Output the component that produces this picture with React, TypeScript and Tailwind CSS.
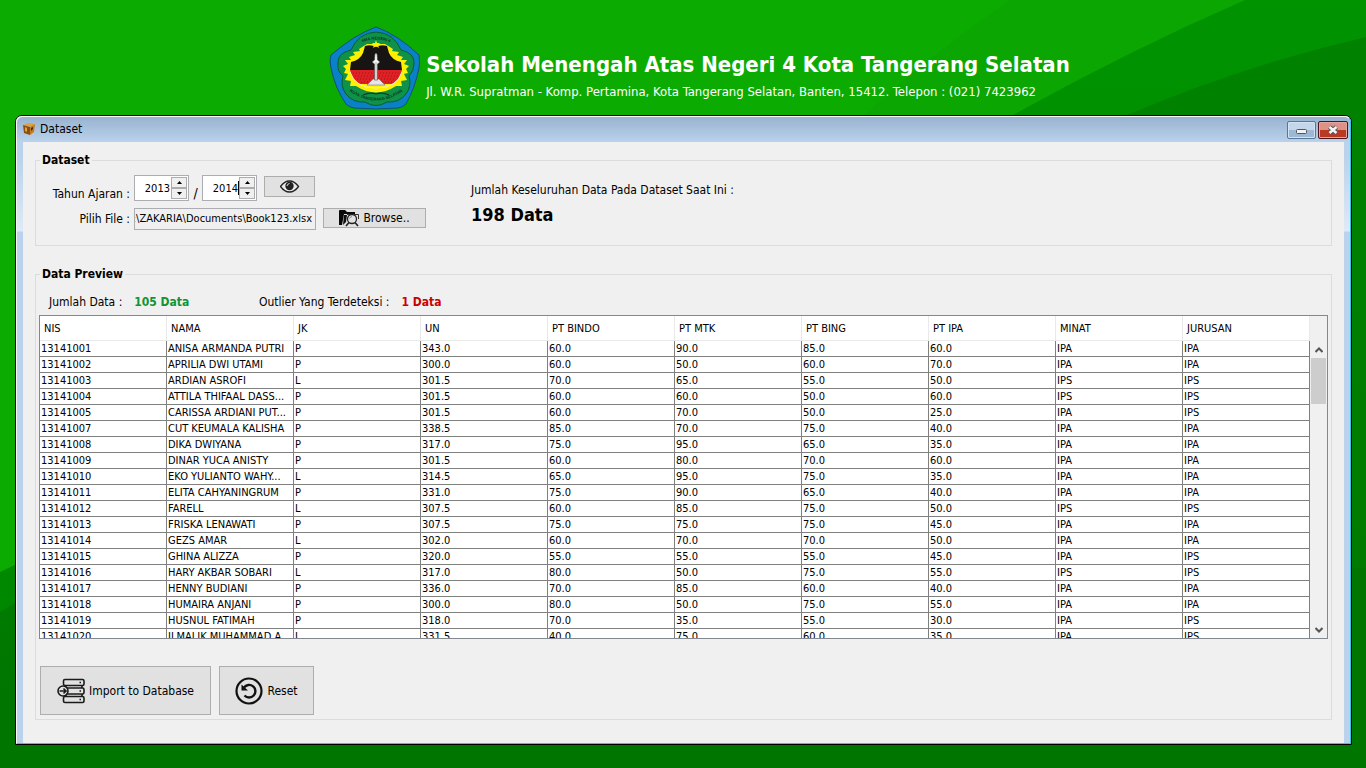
import React from "react";

const columns = ["NIS", "NAMA", "JK", "UN", "PT BINDO", "PT MTK", "PT BING", "PT IPA", "MINAT", "JURUSAN"];

const students: string[][] = [
  ["13141001", "ANISA ARMANDA PUTRI", "P", "343.0", "60.0", "90.0", "85.0", "60.0", "IPA", "IPA"],
  ["13141002", "APRILIA DWI UTAMI", "P", "300.0", "60.0", "50.0", "60.0", "70.0", "IPA", "IPA"],
  ["13141003", "ARDIAN ASROFI", "L", "301.5", "70.0", "65.0", "55.0", "50.0", "IPS", "IPS"],
  ["13141004", "ATTILA THIFAAL DASS...", "P", "301.5", "60.0", "60.0", "50.0", "60.0", "IPS", "IPS"],
  ["13141005", "CARISSA ARDIANI PUT...", "P", "301.5", "60.0", "70.0", "50.0", "25.0", "IPA", "IPS"],
  ["13141007", "CUT KEUMALA KALISHA", "P", "338.5", "85.0", "70.0", "75.0", "40.0", "IPA", "IPA"],
  ["13141008", "DIKA DWIYANA", "P", "317.0", "75.0", "95.0", "65.0", "35.0", "IPA", "IPA"],
  ["13141009", "DINAR YUCA ANISTY", "P", "301.5", "60.0", "80.0", "70.0", "60.0", "IPA", "IPA"],
  ["13141010", "EKO YULIANTO WAHY...", "L", "314.5", "65.0", "95.0", "75.0", "35.0", "IPA", "IPA"],
  ["13141011", "ELITA CAHYANINGRUM", "P", "331.0", "75.0", "90.0", "65.0", "40.0", "IPA", "IPA"],
  ["13141012", "FARELL", "L", "307.5", "60.0", "85.0", "75.0", "50.0", "IPS", "IPS"],
  ["13141013", "FRISKA LENAWATI", "P", "307.5", "75.0", "75.0", "75.0", "45.0", "IPA", "IPA"],
  ["13141014", "GEZS AMAR", "L", "302.0", "60.0", "70.0", "70.0", "50.0", "IPA", "IPA"],
  ["13141015", "GHINA ALIZZA", "P", "320.0", "55.0", "55.0", "55.0", "45.0", "IPA", "IPS"],
  ["13141016", "HARY AKBAR SOBARI", "L", "317.0", "80.0", "50.0", "75.0", "55.0", "IPS", "IPS"],
  ["13141017", "HENNY BUDIANI", "P", "336.0", "70.0", "85.0", "60.0", "40.0", "IPA", "IPA"],
  ["13141018", "HUMAIRA ANJANI", "P", "300.0", "80.0", "50.0", "75.0", "55.0", "IPA", "IPA"],
  ["13141019", "HUSNUL FATIMAH", "P", "318.0", "70.0", "35.0", "55.0", "30.0", "IPA", "IPS"],
  ["13141020", "ILMALIK MUHAMMAD A...", "L", "331.5", "40.0", "75.0", "60.0", "35.0", "IPA", "IPS"],
];

function Backdrop() {
  return (
    <svg className="absolute inset-0 h-full w-full" viewBox="0 0 1366 768" preserveAspectRatio="none" aria-hidden="true">
      <defs>
        <linearGradient id="mid" x1="0" y1="0" x2="0" y2="1">
          <stop offset="0" stopColor="#009300" />
          <stop offset="1" stopColor="#008400" />
        </linearGradient>
        <linearGradient id="deep" x1="0" y1="0" x2="0" y2="1">
          <stop offset="0" stopColor="#008200" />
          <stop offset="0.8" stopColor="#007a00" />
          <stop offset="1" stopColor="#007200" />
        </linearGradient>
      </defs>
      <rect width="1366" height="768" fill="#0cab02" />
      <path d="M1010 0H1366V300H700Q820 130 1010 0Z" fill="#0ca602" />
      <path d="M1245 0Q1130 50 1013 115Q700 300 400 420Q150 500 0 572V768H1366V0Z" fill="url(#mid)" />
      <path d="M1366 37Q1245 65 1127 115Q850 240 500 420Q150 520 0 612V768H1366Z" fill="url(#deep)" />
      <path d="M0 700Q500 560 1366 568V768H0Z" fill="#007600" />
    </svg>
  );
}

function Emblem() {
  return (
    <svg className="h-[92px] w-24 shrink-0" viewBox="0 0 96 92" role="img" aria-label="Lambang SMA Negeri 4">
      <defs>
        <path id="arcTop" d="M26 25Q48 10 70 25" />
        <path id="arcBottom" d="M17 66Q48 91 79 66" />
      </defs>
      <path d="M48 5Q70 13 91 33Q92 40 91 46Q87 66 78 82Q75 85 70 86Q48 88 26 86Q21 85 18 82Q7 66 3 46Q1 38 3 33Q26 13 48 5Z" fill="#0a80c8" stroke="#12507a" strokeWidth="1" />
      <path d="M48 10Q66 11 73 28Q87 31 86 42Q86 49 81 54Q84 64 78 72Q71 81 59 80Q48 87 37 80Q25 81 18 72Q12 64 15 54Q9 49 10 42Q9 31 23 28Q30 11 48 10Z" fill="#0f9147" stroke="#075f2d" strokeWidth="1" />
      <path d="M39 22L31 27L32 29L25 30L27 33L21 35L23 38L17 38L20 42L15 44L18 47L16 51L20 52L17 58L23 59L22 64L28 64Q48 77 68 64L74 64L73 59L79 58L76 52L80 51L78 47L81 44L76 42L79 38L73 38L75 35L69 33L71 30L64 29L65 27L57 22Z" fill="#fff000" />
      <path d="M37 24Q43 22 48 25Q53 22 59 24L61 31Q64 38 73 40L74 48H22L23 40Q32 38 35 31Z" fill="#191414" />
      <path d="M22 48H74Q72 58 64 62H32Q24 58 22 48Z" fill="#df2025" />
      <path d="M25 51H72M27 54H70M29 57H68M33 60H64" stroke="#9d1518" strokeWidth="1" strokeDasharray="1 2" />
      <path d="M22 50Q27 66 48 66Q69 66 74 50" fill="none" stroke="#f5efce" strokeWidth="1" />
      <path d="M39 63L45 57H51L57 63Z" fill="#e6e6e6" stroke="#665555" strokeWidth="0.5" />
      <path d="M46.500 58V42L44 40L46.500 38L46.800 33Q48 29 49.200 33L49.500 38L52 40L49.500 42V58Z" fill="#f5f5f5" stroke="#444" strokeWidth="0.600" />
      <path d="M48 40V58" stroke="#999" strokeWidth="0.800" />
      <path d="M48 18L49 21L52 21L50 23L51 26L48 24L45 26L46 23L44 21L47 21Z" fill="#fff000" />
      <path d="M35 73Q42 70 48 72Q54 70 61 73" fill="none" stroke="#123b22" strokeWidth="1.200" />
      <text fill="#07381c" fontFamily="Liberation Sans, sans-serif" fontWeight="700" fontSize="4">
        <textPath href="#arcTop" startOffset="50%" textAnchor="middle">SMA NEGERI 4</textPath>
      </text>
      <text fill="#07381c" fontFamily="Liberation Sans, sans-serif" fontWeight="700" fontSize="4">
        <textPath href="#arcBottom" startOffset="50%" textAnchor="middle">KOTA TANGERANG SELATAN</textPath>
      </text>
    </svg>
  );
}

function CubeIcon() {
  return (
    <svg className="h-[14px] w-[14px]" viewBox="0 0 14 14" aria-hidden="true">
      <path d="M1 3L6 1L13 2L8 5Z" fill="#d9a441" />
      <path d="M1 3L8 5V13L2 11Z" fill="#8a4f10" />
      <path d="M8 5L13 2L12 10L8 13Z" fill="#c57d1c" />
      <path d="M3 5L5 6V10L3 9Z" fill="#e2a23c" />
      <path d="M9 6L11 5V7L9 9Z" fill="#4a2806" />
    </svg>
  );
}

function EyeIcon() {
  return (
    <svg className="h-[14px] w-5" viewBox="0 0 20 14" aria-hidden="true">
      <path d="M0.500 6.500Q4.500 1 9.500 1T18.500 6.500Q14.500 12 9.500 12T0.500 6.500Z" fill="#ececec" stroke="#222" strokeWidth="1.300" />
      <circle cx="9.500" cy="6" r="4.200" fill="#222" />
      <path d="M9.500 3.500A3 3 0 0 0 7 6" fill="none" stroke="#ddd" strokeWidth="1" />
    </svg>
  );
}

function FolderSearchIcon() {
  return (
    <svg className="h-[18px] w-5 shrink-0" viewBox="0 0 20 18" aria-hidden="true">
      <path d="M0 16V2Q0 1 1 1H6L8 3H16V5H5L3 16Z" fill="#0a0a0a" />
      <path d="M5 6H8L7 13L4 16Z" fill="#111" />
      <path d="M8 5.500H19.500V10" fill="none" stroke="#333" strokeWidth="1" />
      <circle cx="13" cy="10" r="4.500" fill="#e1e1e1" stroke="#222" strokeWidth="1.300" />
      <path d="M10.500 9.500A3 3 0 0 1 13 7.500" fill="none" stroke="#888" />
      <path d="M10 13.500L7 17M16 13.500L19 17" stroke="#222" strokeWidth="1.600" />
    </svg>
  );
}

function DatabaseImportIcon() {
  return (
    <svg className="h-[26px] w-[28px] shrink-0" viewBox="0 0 28 26" fill="none" stroke="#1b1b1b" strokeWidth="1.600" aria-hidden="true">
      <rect x="6.500" y="1.500" width="20.500" height="6" rx="1.500" />
      <rect x="6.500" y="18.500" width="20.500" height="6" rx="1.500" />
      <path d="M10 10H25.500Q27 10 27 11.500V14.500Q27 16 25.500 16H10" />
      <path d="M9 7.500V10M25 7.500V10M9 16V18.500M25 16V18.500" />
      <circle cx="6" cy="13" r="5" fill="#e1e1e1" />
      <path d="M2.500 13H9M6.500 10.500L9 13L6.500 15.500" />
      <path d="M22.500 4.500H24M22.500 13H24M22.500 21.500H24" strokeWidth="1.500" />
    </svg>
  );
}

function ResetIcon() {
  return (
    <svg className="h-7 w-7 shrink-0" viewBox="0 0 28 28" fill="none" stroke="#111" aria-hidden="true">
      <circle cx="14" cy="14" r="12.500" strokeWidth="2.200" />
      <path d="M9 10.500A6.300 6.300 0 1 1 9.500 18.500" strokeWidth="2.400" />
      <path d="M6.500 7.500V13.500H13Z" fill="#111" stroke="none" />
    </svg>
  );
}

function YearSpinner({ id, label, value, active }: { id: string; label: string; value: string; active?: boolean }) {
  return (
    <div className="flex h-[26px] w-[55px] border border-[#abadb3] bg-white p-px">
      <input id={id} aria-label={label} defaultValue={value} className="min-w-0 flex-1 bg-white pt-[2px] text-right text-[11px] outline-none" />
      <span className={active ? "my-1 w-px bg-black" : "my-1 w-px"} />
      <div className="flex w-4 flex-col">
        <button type="button" aria-label={label + " naik"} className="flex flex-1 items-center justify-center border border-[#acacac] bg-[#f0f0f0]">
          <svg className="h-[3px] w-[5px]" viewBox="0 0 5 3" aria-hidden="true"><path d="M0 3L2.500 0L5 3Z" /></svg>
        </button>
        <button type="button" aria-label={label + " turun"} className="flex flex-1 items-center justify-center border border-[#acacac] bg-[#f0f0f0]">
          <svg className="h-[3px] w-[5px]" viewBox="0 0 5 3" aria-hidden="true"><path d="M0 0L2.500 3L5 0Z" /></svg>
        </button>
      </div>
    </div>
  );
}

function DatasetPanel() {
  return (
    <fieldset className="h-[93px] border border-[#dcdcdc]">
      <legend className="ml-1 px-[2px] text-[12px] leading-[14px] font-bold">Dataset</legend>
      <div className="flex items-start pt-2 pl-[6px]">
        <div className="grid w-[429px] grid-cols-[88px_1fr] gap-x-1 gap-y-[6px] text-[12px]">
          <label htmlFor="tahun-awal" className="pt-[11px] text-right leading-[16px]">Tahun Ajaran :</label>
          <div className="flex items-start">
            <YearSpinner id="tahun-awal" label="Tahun awal" value="2013" />
            <span className="w-[13px] pt-[10px] text-center text-[14px] leading-[16px]">/</span>
            <YearSpinner id="tahun-akhir" label="Tahun akhir" value="2014" active />
            <button type="button" aria-label="Lihat" className="mt-px ml-[7px] flex h-[21px] w-[51px] items-center justify-center border border-[#adadad] bg-[#e1e1e1]">
              <EyeIcon />
            </button>
          </div>
          <label htmlFor="file" className="pt-[3px] text-right leading-[16px]">Pilih File :</label>
          <div className="flex items-start gap-[7px]">
            <div className="flex h-[22px] w-[182px] justify-end overflow-hidden border border-[#abadb3] bg-[#f0f0f0] px-[3px]">
              <input id="file" readOnly defaultValue=":\ZAKARIA\Documents\Book123.xlsx" className="w-[186px] shrink-0 bg-transparent text-right text-[11px] outline-none" />
            </div>
            <button type="button" className="flex h-5 w-[103px] items-center justify-center gap-1 border border-[#adadad] bg-[#e1e1e1]">
              <FolderSearchIcon />
              Browse..
            </button>
          </div>
        </div>
        <div className="pt-[7px]">
          <p className="text-[12px] leading-[16px]">Jumlah Keseluruhan Data Pada Dataset Saat Ini :</p>
          <p className="mt-[6px] text-[18px] leading-[22px] font-bold">198 Data</p>
        </div>
      </div>
    </fieldset>
  );
}

function StudentTable() {
  return (
    <div className="flex h-[324px] overflow-hidden border border-[#828790] bg-[#f0f0f0]">
      <div className="min-w-0 flex-1 overflow-hidden">
        <table className="w-full table-fixed border-separate border-spacing-0 bg-white">
          <thead>
            <tr>
              {columns.map((c) => (
                <th key={c} className="h-[25px] border-r border-b border-[#e9e9e9] p-0 pt-[2px] pl-1 text-left text-[11px] leading-[16px] font-normal">{c}</th>
              ))}
            </tr>
          </thead>
          <tbody>
            {students.map((row) => (
              <tr key={row[0]}>
                {row.map((cell, i) => (
                  <td key={i} className="h-4 overflow-hidden border-r border-b border-[#808080] p-0 pl-px text-[11px] leading-[15px] whitespace-nowrap">{cell}</td>
                ))}
              </tr>
            ))}
          </tbody>
        </table>
      </div>
      <div className="flex w-[17px] flex-col items-center pt-[25px]">
        <div className="flex h-[17px] items-center">
          <svg className="h-[6px] w-2" viewBox="0 0 8 6" aria-hidden="true"><path d="M0.500 5L4 1.500L7.500 5" fill="none" stroke="#555" strokeWidth="2" /></svg>
        </div>
        <div className="h-[46px] w-[15px] bg-[#cdcdcd]" />
        <div className="mt-auto flex h-[17px] items-center">
          <svg className="h-[6px] w-2" viewBox="0 0 8 6" aria-hidden="true"><path d="M0.500 1L4 4.500L7.500 1" fill="none" stroke="#555" strokeWidth="2" /></svg>
        </div>
      </div>
    </div>
  );
}

function PreviewPanel() {
  return (
    <fieldset className="mt-[21px] border border-[#dcdcdc]">
      <legend className="ml-1 px-[2px] text-[12px] leading-[14px] font-bold">Data Preview</legend>
      <div className="px-[3px] pb-1">
        <div className="flex pt-[13px] pb-[5px] pl-[10px] text-[12px] leading-[16px]">
          <p className="flex w-[210px] gap-3">Jumlah Data : <b className="text-[#0e9535]">105 Data</b></p>
          <p className="flex gap-3">Outlier Yang Terdeteksi : <b className="text-[#cc0000]">1 Data</b></p>
        </div>
        <StudentTable />
        <div className="mt-[27px] flex gap-2 pl-px text-[12px]">
          <button type="button" className="flex h-[49px] w-[171px] items-center justify-center gap-1 border border-[#adadad] bg-[#e1e1e1]">
            <DatabaseImportIcon />
            Import to Database
          </button>
          <button type="button" className="flex h-[49px] w-[95px] items-center justify-center gap-1 border border-[#adadad] bg-[#e1e1e1]">
            <ResetIcon />
            Reset
          </button>
        </div>
      </div>
    </fieldset>
  );
}

function TitleBar() {
  return (
    <div className="flex h-[25px] items-start rounded-t-md bg-linear-to-b from-[#98b3d1] to-[#bad2eb] pr-[2px] pl-[5px] text-[12px]">
      <span className="pt-[5px]"><CubeIcon /></span>
      <h2 className="ml-1 pt-1 leading-[16px]">Dataset</h2>
      <div className="ml-auto flex h-[18px] gap-[2px] self-center">
        <button type="button" aria-label="Minimize" className="flex w-[29px] items-center justify-center rounded-xs border border-[#5a7595] bg-linear-to-b from-[#c3d6ea] from-50% to-[#9db8d4] to-50% pt-1 inset-ring inset-ring-[#d3e3f3]">
          <svg className="h-[5px] w-[11px]" viewBox="0 0 11 5" aria-hidden="true"><rect x="0.500" y="0.500" width="10" height="4" rx="1" fill="#f2f2f2" stroke="#50555f" /></svg>
        </button>
        <button type="button" aria-label="Close" className="flex w-[30px] items-center justify-center rounded-xs border border-[#4d1520] bg-linear-to-b from-[#dd9187] from-50% to-[#b93a22] to-50% inset-ring inset-ring-[#e4a69d]">
          <svg className="h-[10px] w-3" viewBox="0 0 12 10" aria-hidden="true">
            <path d="M2.500 2L9.500 8M9.500 2L2.500 8" stroke="#535666" strokeWidth="4.500" />
            <path d="M2.500 2L9.500 8M9.500 2L2.500 8" stroke="#f5f5f5" strokeWidth="2.500" />
          </svg>
        </button>
      </div>
    </div>
  );
}

export default function App() {
  return (
    <div className="relative isolate flex min-h-screen flex-col overflow-hidden bg-[#0cab02] font-['DejaVu_Sans_Condensed','DejaVu_Sans',sans-serif] text-black">
      <div className="absolute inset-0 -z-10"><Backdrop /></div>
      <header className="flex h-[115px] justify-center pt-[22px] pl-8 text-white">
        <Emblem />
        <div className="ml-[2px] pt-[29px]">
          <h1 className="text-[22px] leading-[28px] font-bold">Sekolah Menengah Atas Negeri 4 Kota Tangerang Selatan</h1>
          <p className="mt-[5px] text-[13px] leading-[16px]">Jl. W.R. Supratman - Komp. Pertamina, Kota Tangerang Selatan, Banten, 15412. Telepon : (021) 7423962</p>
        </div>
      </header>
      <main className="mr-[14px] mb-[23px] ml-[15px] flex flex-1 flex-col rounded-t-[7px] border border-black bg-[#bad2eb]">
        <div className="flex flex-1 flex-col rounded-t-md border border-t-white border-r-[#35c4ef] border-b-[#35c4ef] border-l-white bg-[linear-gradient(to_bottom,#bad2eb_0,#bad2eb_40px,#dfeaf6_114px,#bad2eb_115px)]">
          <TitleBar />
          <div className="mx-[6px] flex-1 bg-[#f0f0f0] pt-[11px] pr-3 pl-3">
            <DatasetPanel />
            <PreviewPanel />
          </div>
        </div>
      </main>
    </div>
  );
}
